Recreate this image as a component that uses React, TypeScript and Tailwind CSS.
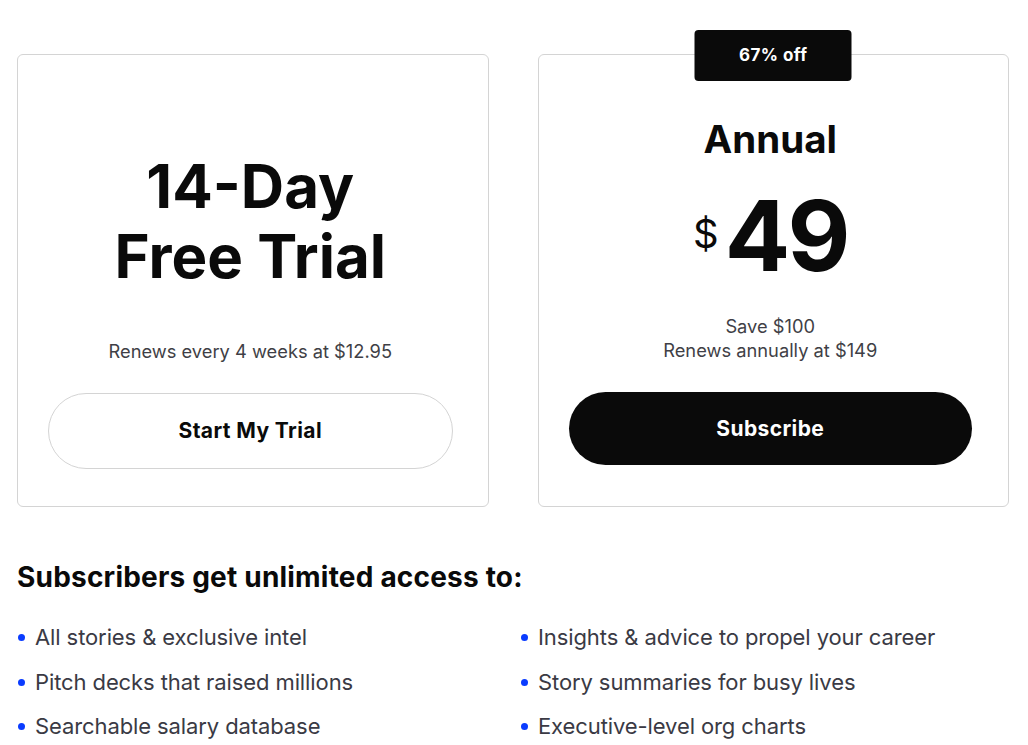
import React from 'react';

const font = { fontFamily: 'Inter, "Liberation Sans", sans-serif' };

const perks = [
  'All stories & exclusive intel',
  'Insights & advice to propel your career',
  'Pitch decks that raised millions',
  'Story summaries for busy lives',
  'Searchable salary database',
  'Executive-level org charts',
];

const App: React.FC = () => {
  return (
    <div className="min-h-screen bg-white text-[#0a0a0a]" style={font}>
      <div className="pl-[17px] pr-[19px] pt-[54px]">
        {/* プランカード */}
        <div className="grid grid-cols-2 gap-[49px]">
          {/* 無料トライアル */}
          <div className="flex h-[453px] flex-col justify-end rounded-[6px] border border-[#d4d4d4] pb-[37px] pl-[30px] pr-[35px]">
            <h2 className="text-center text-[60px] font-bold leading-[70px]">
              14-Day
              <br />
              Free Trial
            </h2>
            <p className="mt-[48px] text-center text-[18.3px] leading-[24px] text-[#3f3f46]">
              Renews every 4 weeks at $12.95
            </p>
            <button className="mt-[30px] h-[76px] w-full rounded-full border border-[#d4d4d4] bg-white text-[21px] font-bold tracking-[0.4px] text-[#0a0a0a]">
              Start My Trial
            </button>
          </div>

          {/* 年額プラン */}
          <div className="relative flex h-[453px] flex-col items-center rounded-[6px] border border-[#d4d4d4] pl-[30px] pr-[36px] pt-[60px]">
            <div className="absolute left-1/2 top-[-25px] flex h-[51px] w-[157px] -translate-x-1/2 items-center justify-center rounded-[4px] bg-[#0a0a0a] text-[17px] font-bold tracking-[0.4px] text-white">
              67% off
            </div>
            <h2 className="text-[38.5px] font-bold leading-[48px]">Annual</h2>
            <div className="mt-[23px] flex items-center justify-center">
              <span className="mr-[6px] mt-[-4px] text-[40px] leading-none">$</span>
              <span className="text-[97px] font-bold leading-[100px] tracking-[-3px]">49</span>
            </div>
            <div className="mt-[28px] text-center text-[18.3px] leading-[24px] text-[#3f3f46]">
              <p>Save $100</p>
              <p>Renews annually at $149</p>
            </div>
            <button className="mt-[30px] h-[73px] w-full rounded-full bg-[#0a0a0a] text-[21px] font-bold tracking-[0.4px] text-white">
              Subscribe
            </button>
          </div>
        </div>

        {/* 特典リスト */}
        <h3 className="mt-[52px] text-[28px] font-bold leading-[36px] tracking-[0.2px]">
          Subscribers get unlimited access to:
        </h3>
        <ul className="mt-[26px] grid grid-cols-2 gap-x-[14px] gap-y-[11.5px]">
          {perks.map((perk) => (
            <li key={perk} className="flex items-center text-[22px] leading-[33px] tracking-[-0.1px] text-[#3a3a44]">
              <span className="ml-[1px] mr-[10px] h-[7px] w-[7px] shrink-0 rounded-full bg-[#0a3cff]" />
              {perk}
            </li>
          ))}
        </ul>
      </div>
    </div>
  );
};

export default App;
